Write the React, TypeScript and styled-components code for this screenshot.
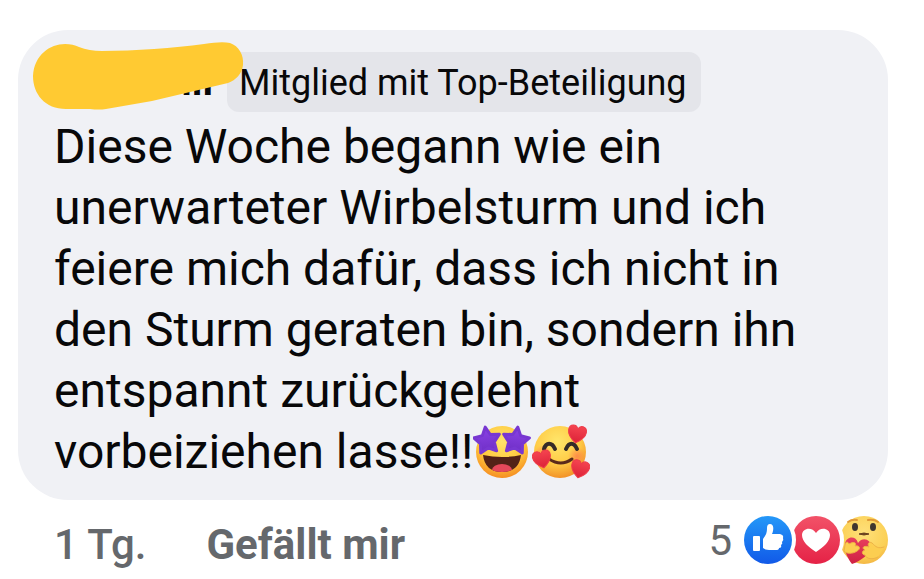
import React from "react";
import styled, { createGlobalStyle } from "styled-components";

const GlobalStyle = createGlobalStyle`
  * { box-sizing: border-box; }
  body { margin: 0; background: #fff; font-family: Roboto, "Liberation Sans", sans-serif; }
`;

const Comment = styled.article`
  padding: 30px 36px 0 18px;
`;

const Bubble = styled.section`
  position: relative;
  padding: 22px 34px 18px 36px;
  border-radius: 50px;
  background: #f0f1f5;
  color: #080809;
`;

const Header = styled.header`
  display: flex;
  align-items: center;
  gap: 14px;
  height: 60px;
`;

const Author = styled.strong`
  width: 159px;
  text-align: right;
  font-size: 40px;
  line-height: 48px;
  font-weight: 700;
`;

const Badge = styled.span`
  padding: 2px 14px 0 12px;
  border-radius: 12px;
  background: #e4e5ea;
  font-size: 36px;
  line-height: 58px;
  white-space: nowrap;
`;

const Marker = styled.svg`
  position: absolute;
  left: 14px;
  top: 11px;
  width: 212px;
  height: 70px;
`;

const Body = styled.p`
  margin: 4px 0 0;
  font-size: 48px;
  line-height: 61px;
`;

const Emoji = styled.svg`
  width: 58px;
  height: 56px;
  margin-right: 1px;
  vertical-align: -12px;
`;

const Footer = styled.footer`
  display: flex;
  align-items: flex-start;
  padding: 15px 0 0 36px;
  color: #65686c;
  font-size: 42px;
  line-height: 60px;
`;

const Time = styled.time`
  margin-right: 60px;
  font-weight: 500;
`;

const LikeButton = styled.button`
  padding: 0;
  border: 0;
  background: none;
  color: inherit;
  font: inherit;
  font-weight: 700;
`;

const Reactions = styled.div`
  display: flex;
  align-items: center;
  margin-left: auto;
`;

const Count = styled.span`
  margin-right: 12px;
  padding-top: 2px;
  line-height: 48px;
`;

const Reaction = styled.svg`
  width: 48px;
  height: 48px;
`;

const STAR = "M0-13 4-5 13-4 7 3 8 12 0 8-8 12-7 3-13-4-4-5Z";
const HEART = "M0 9C-6 5-9 1-9-3C-9-9-2-10 0-5C2-10 9-9 9-3C9 1 6 5 0 9Z";

function StarEyes() {
  return (
    <Emoji viewBox="0 0 58 56" role="img" aria-label="Sternenaugen">
      <defs>
        <radialGradient id="faceA" cx=".5" cy=".3" r=".72">
          <stop offset="0" stopColor="#ffe56b" />
          <stop offset=".6" stopColor="#ffc83d" />
          <stop offset="1" stopColor="#f58a20" />
        </radialGradient>
        <linearGradient id="star" x2="0" y2="1">
          <stop stopColor="#8b43e6" />
          <stop offset="1" stopColor="#6f2fc6" />
        </linearGradient>
        <clipPath id="mouthA"><path d="M10 31Q29 35 48 31Q46 48 29 48Q12 48 10 31Z" /></clipPath>
      </defs>
      <circle cx="29" cy="28" r="26" fill="url(#faceA)" />
      <g clipPath="url(#mouthA)">
        <path d="M8 29H50V52H8Z" fill="#532217" />
        <ellipse cx="29" cy="46" rx="10" ry="6" fill="#e5485a" />
      </g>
      <path d={STAR} transform="translate(14 16) rotate(-8)" fill="url(#star)" stroke="#7837d1" strokeWidth="3" strokeLinejoin="round" />
      <path d={STAR} transform="translate(43 16) rotate(8)" fill="url(#star)" stroke="#7837d1" strokeWidth="3" strokeLinejoin="round" />
    </Emoji>
  );
}

function HeartsFace() {
  return (
    <Emoji viewBox="0 0 58 56" role="img" aria-label="Lächeln mit Herzen">
      <defs>
        <radialGradient id="faceB" cx=".45" cy=".3" r=".72">
          <stop offset="0" stopColor="#ffe66b" />
          <stop offset=".6" stopColor="#ffcb45" />
          <stop offset="1" stopColor="#f18e26" />
        </radialGradient>
        <radialGradient id="blush">
          <stop stopColor="#ff744b" stopOpacity=".7" />
          <stop offset="1" stopColor="#ff744b" stopOpacity="0" />
        </radialGradient>
        <linearGradient id="heart" x2="0" y2="1">
          <stop stopColor="#f54450" />
          <stop offset="1" stopColor="#dc2238" />
        </linearGradient>
      </defs>
      <circle cx="28" cy="28" r="26" fill="url(#faceB)" />
      <circle cx="11" cy="30" r="9" fill="url(#blush)" />
      <circle cx="45" cy="32" r="9" fill="url(#blush)" />
      <path d="M12 25C14 18 20 18 23 25M34 25C37 18 42 18 45 25" fill="none" stroke="#352b28" strokeWidth="4" strokeLinecap="round" />
      <path d="M17 35Q29 43 40 35" fill="none" stroke="#5b2b1b" strokeWidth="3" strokeLinecap="round" />
      <path d={HEART} transform="translate(45 10) rotate(10)" fill="url(#heart)" stroke="#ee3b49" />
      <path d={HEART} transform="translate(10 35) rotate(-12)" fill="url(#heart)" stroke="#ee3b49" />
      <path d={HEART} transform="translate(48 45) rotate(14)" fill="url(#heart)" stroke="#ee3b49" />
    </Emoji>
  );
}

function LikeIcon() {
  return (
    <Reaction viewBox="0 0 48 48" role="img" aria-label="Gefällt mir">
      <defs>
        <linearGradient id="blue" x2="0" y2="1">
          <stop stopColor="#2498f8" />
          <stop offset="1" stopColor="#1159e8" />
        </linearGradient>
      </defs>
      <circle cx="24" cy="24" r="24" fill="url(#blue)" />
      <rect x="9" y="20" width="7" height="15" rx="1" fill="#fff" />
      <path d="M19 23C22 19 23 17 23 12Q23 8 26 8C30 8 30 14 28 18H36Q40 19 39 22Q40 24 38 26Q39 28 37 29Q38 32 35 32Q35 34 32 34H25Q21 34 19 32Z" fill="#fff" />
    </Reaction>
  );
}

function LoveIcon() {
  return (
    <Reaction viewBox="0 0 48 48" role="img" aria-label="Love">
      <defs>
        <linearGradient id="red" x2="0" y2="1">
          <stop stopColor="#f25268" />
          <stop offset="1" stopColor="#e52246" />
        </linearGradient>
      </defs>
      <circle cx="24" cy="24" r="24" fill="url(#red)" />
      <circle cx="-24" cy="24" r="28" fill="#fff" />
      <path d="M24 36C16 31 10 25 10 19C10 12 20 10 24 17C28 10 38 12 38 19C38 25 32 31 24 36Z" fill="#fff" />
    </Reaction>
  );
}

function CareIcon() {
  return (
    <Reaction viewBox="0 0 48 48" role="img" aria-label="Umarmung">
      <defs>
        <radialGradient id="faceC" cx=".5" cy=".35" r=".7">
          <stop stopColor="#ffe07a" />
          <stop offset=".7" stopColor="#fbd055" />
          <stop offset="1" stopColor="#f2b040" />
        </radialGradient>
        <linearGradient id="hug" x2="0" y2="1">
          <stop stopColor="#e83f5e" />
          <stop offset="1" stopColor="#cf2143" />
        </linearGradient>
      </defs>
      <circle cx="24" cy="24" r="24" fill="url(#faceC)" />
      <circle cx="-24" cy="24" r="28" fill="#fff" />
      <path d="M8 6Q12 3 17 4M28 4Q34 3 38 6" fill="none" stroke="#e09a38" strokeWidth="2" strokeLinecap="round" />
      <ellipse cx="15" cy="11" rx="3" ry="4" fill="#40362f" />
      <ellipse cx="33" cy="11" rx="3" ry="4" fill="#40362f" />
      <path d="M19 18Q24 16 29 18Q24 20 19 18Z" fill="#6b421f" stroke="#6b421f" />
      <path d="M12 48C8 43 4 35 5 28C6 20 16 19 18 27C23 20 31 24 31 30C30 38 21 45 12 48Z" fill="url(#hug)" />
      <path d="M5 29C5 26 8 25 9 28C14 25 17 27 15 30C20 29 21 33 17 35C13 38 6 38 4 35Z" fill="#fcce50" stroke="#eeb246" />
      <path d="M44 31C38 33 36 31 32 27C29 25 27 28 29 31C24 29 21 32 25 34C21 35 22 39 25 39C26 43 33 44 38 41" fill="#fcce50" stroke="#eeb246" strokeLinecap="round" />
    </Reaction>
  );
}

export default function App() {
  return (
    <>
      <GlobalStyle />
      <Comment>
        <Bubble>
          <Header>
            <Author>iii</Author>
            <Badge>Mitglied mit Top-Beteiligung</Badge>
          </Header>
          <Marker viewBox="0 0 212 70" aria-hidden="true">
            <path d="M1 35C2 14 18 3 33 3Q41 3 47 6Q57 10 70 10C103 10 142 7 172 3Q190 0 198 2C207 5 212 14 211 24C210 33 204 39 196 42L120 60L74 68Q67 69 58 68H34C13 68 1 53 1 35Z" fill="#ffca32" />
          </Marker>
          <Body>
            Diese Woche begann wie ein unerwarteter Wirbelsturm und ich feiere mich dafür, dass ich nicht in den Sturm geraten bin, sondern ihn entspannt zurückgelehnt vorbeiziehen lasse!!<StarEyes /><HeartsFace />
          </Body>
        </Bubble>
        <Footer>
          <Time>1 Tg.</Time>
          <LikeButton type="button">Gefällt mir</LikeButton>
          <Reactions>
            <Count>5</Count>
            <LikeIcon />
            <LoveIcon />
            <CareIcon />
          </Reactions>
        </Footer>
      </Comment>
    </>
  );
}
